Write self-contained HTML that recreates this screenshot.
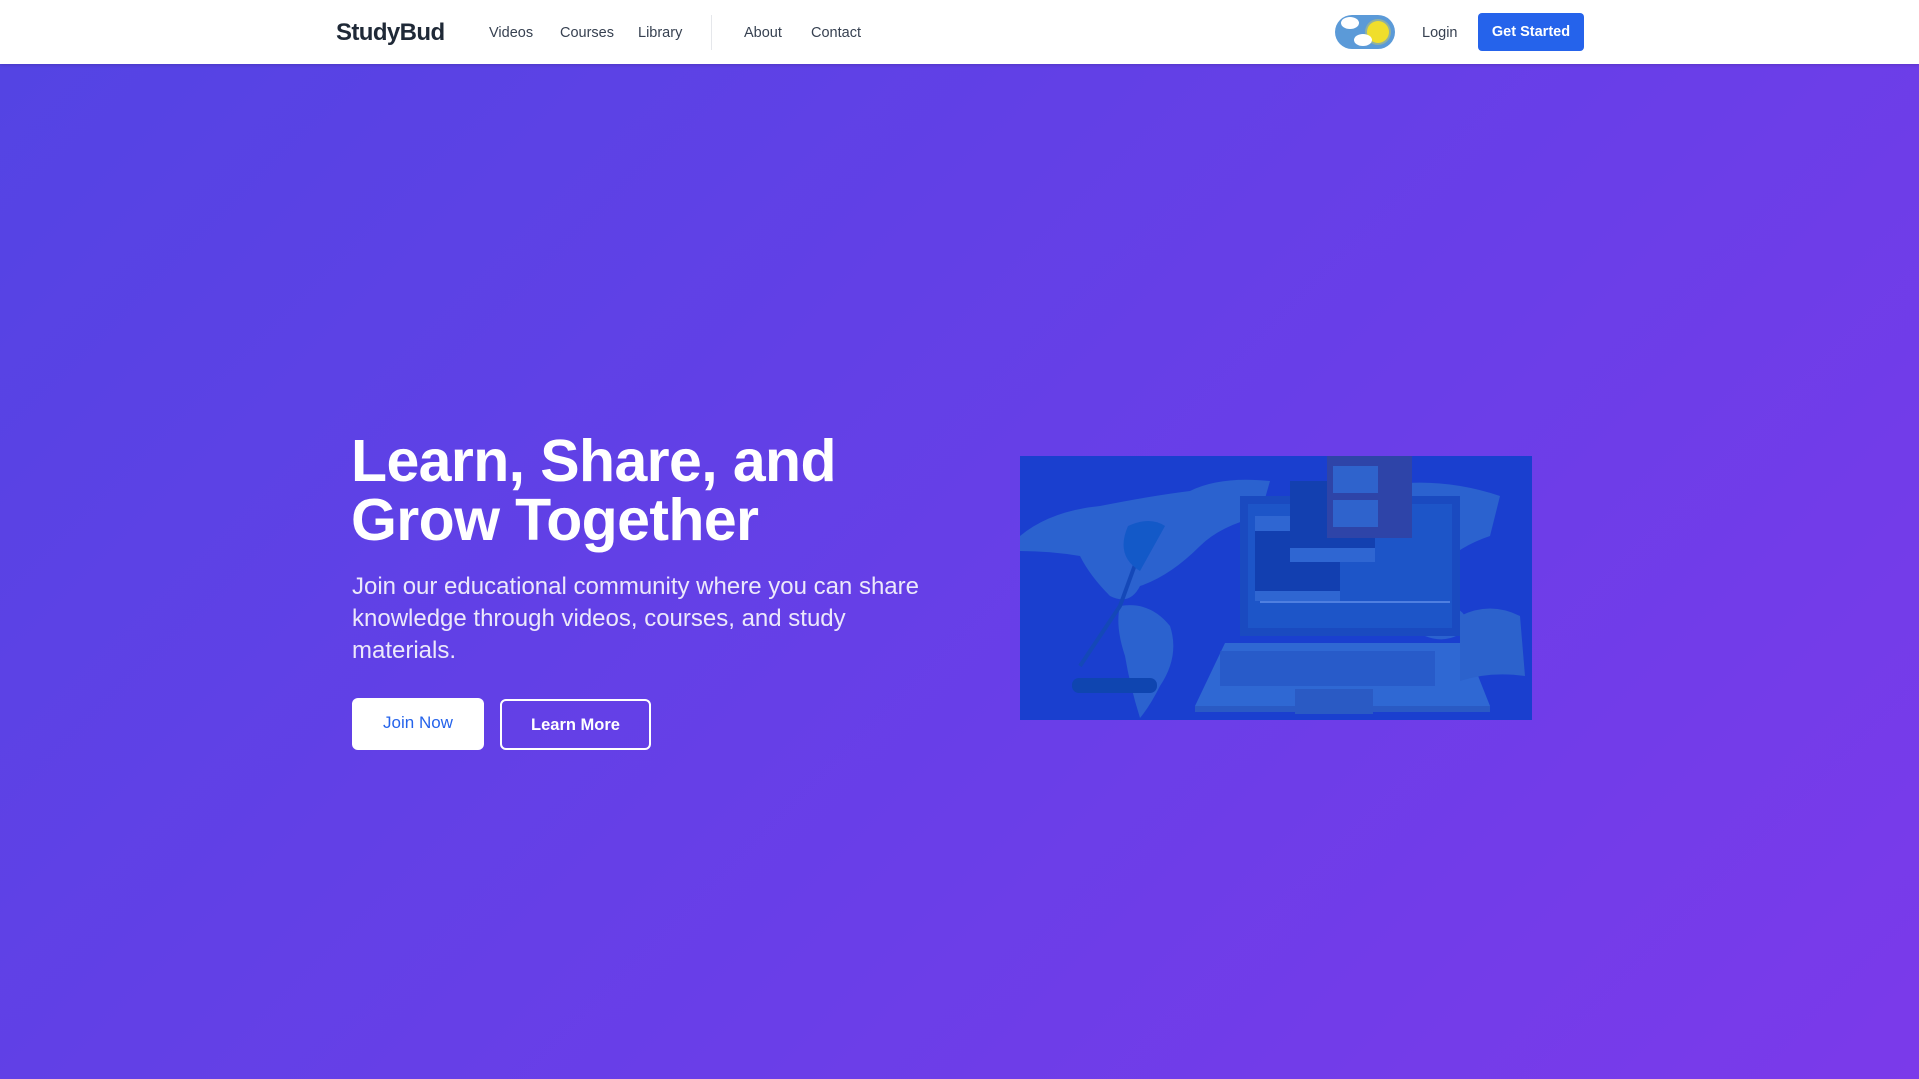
<!DOCTYPE html>
<html><head><meta charset="utf-8"><style>
*{margin:0;padding:0;box-sizing:border-box}
body{width:1919px;height:1079px;overflow:hidden;font-family:"Liberation Sans",sans-serif;background:linear-gradient(135deg,#5344e3 0%,#6a3ee8 60%,#7b3aea 100%)}
nav{position:absolute;top:0;left:0;width:1919px;height:64px;background:#fff;box-shadow:0 1px 3px rgba(0,0,0,.15)}
.logo{position:absolute;left:336px;top:19px;font-size:24px;font-weight:bold;color:#1f2937;letter-spacing:-0.6px}
.nl{position:absolute;top:25px;font-size:14.5px;color:#374151}
.div{position:absolute;left:711px;top:15px;width:1px;height:35px;background:#e5e7eb}
.btn{position:absolute;left:1478px;top:13px;width:106px;height:38px;background:#2563eb;border-radius:4px;color:#fff;font-size:14.5px;font-weight:bold;text-align:center;line-height:38px}
h1{position:absolute;left:351px;top:432px;font-size:59px;line-height:59px;color:#fff;font-weight:bold;letter-spacing:-0.6px}
p{position:absolute;left:352px;top:571px;width:580px;font-size:24px;line-height:32px;color:#ece8fb;letter-spacing:0px}
.b1{position:absolute;left:352px;top:698px;width:132px;height:52px;background:#fff;border-radius:6px;color:#2563eb;font-size:17px;text-align:center;line-height:50px}
.b2{position:absolute;left:500px;top:699px;width:151px;height:51px;border:2px solid #fff;border-radius:6px;color:#fff;font-size:16.5px;font-weight:bold;text-align:center;line-height:48px}
.img{position:absolute;left:1020px;top:456px;width:512px;height:264px;background:#1a3fcf;overflow:hidden}
</style></head><body>
<nav>
<div class="logo">StudyBud</div>
<div class="nl" style="left:489px">Videos</div>
<div class="nl" style="left:560px">Courses</div>
<div class="nl" style="left:638px">Library</div>
<div class="div"></div>
<div class="nl" style="left:744px">About</div>
<div class="nl" style="left:811px">Contact</div>
<svg style="position:absolute;left:1335px;top:15px" width="60" height="34" viewBox="0 0 60 34">
<rect x="0" y="0" width="60" height="34" rx="17" fill="#5b9ad8"/>
<circle cx="43" cy="17" r="13" fill="#8fb0a0"/>
<circle cx="43" cy="17" r="11" fill="#f0de2c"/>
<ellipse cx="15" cy="8" rx="9" ry="6" fill="#fff"/>
<ellipse cx="28" cy="25" rx="9" ry="6" fill="#fff"/>
</svg>
<div class="nl" style="left:1422px">Login</div>
<div class="btn">Get Started</div>
</nav>
<h1>Learn, Share, and<br>Grow Together</h1>
<p>Join our educational community where you can share knowledge through videos, courses, and study materials.</p>
<div class="b1">Join Now</div>
<div class="b2">Learn More</div>
<div class="img">
<svg width="512" height="264" viewBox="0 0 512 264">
<g fill="#2b62cf">
<path d="M0 80 Q30 55 80 50 Q130 40 170 35 Q200 20 250 25 L240 60 Q200 70 180 90 Q150 120 120 130 Q110 150 90 140 Q70 120 60 100 Q30 95 0 95Z"/>
<path d="M100 150 Q130 145 150 170 Q160 200 140 230 Q130 250 120 262 Q110 230 105 200 Q95 170 100 150Z"/>
<path d="M360 30 Q420 20 480 40 L470 80 Q440 90 420 110 Q400 140 380 130 Q360 110 355 80Z"/>
<path d="M400 150 Q440 140 450 170 Q430 190 405 180Z"/>
</g>
<rect x="220" y="40" width="220" height="140" fill="#1a4ac0"/>
<rect x="228" y="48" width="204" height="124" fill="#1d55c8"/>
<rect x="235" y="60" width="85" height="85" fill="#123fb0"/>
<rect x="235" y="60" width="40" height="15" fill="#2f66d2"/>
<rect x="235" y="135" width="85" height="10" fill="#2f66d2"/>
<rect x="270" y="25" width="85" height="80" fill="#1340b0"/>
<rect x="270" y="92" width="85" height="14" fill="#2f66d2"/>
<rect x="307" y="0" width="85" height="82" fill="#2e44a8"/>
<rect x="313" y="10" width="45" height="27" fill="#2f63cc"/>
<rect x="313" y="44" width="45" height="27" fill="#2f63cc"/>
<rect x="240" y="145" width="190" height="2" fill="#4f7fe0"/>
<path d="M175 250 L205 187 L445 187 L470 250Z" fill="#2f68d3"/>
<rect x="175" y="250" width="295" height="6" fill="#2a5ac4"/>
<rect x="200" y="195" width="215" height="35" fill="#2556c4" opacity=".7"/>
<rect x="275" y="233" width="78" height="25" fill="#2a5ac4"/>
<rect x="52" y="222" width="85" height="15" rx="7" fill="#0f45b0"/>
<path d="M60 210 L100 150 L120 95" stroke="#1448b8" stroke-width="4" fill="none"/>
<path d="M108 70 Q130 60 145 70 L120 115 Q95 100 108 70Z" fill="#1359c8"/>
<path d="M440 160 Q470 145 500 160 L505 220 Q470 215 440 225Z" fill="#2c62cc"/>
</svg>
</div>
</body></html>
